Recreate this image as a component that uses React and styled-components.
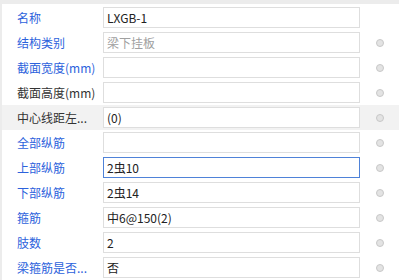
import React from 'react';
import styled, { createGlobalStyle } from 'styled-components';

const GlobalStyle = createGlobalStyle`
  body {
    margin: 0;
    background: #ffffff;
    font-family: "Noto Sans CJK SC", "Noto Sans", sans-serif;
  }
`;

const Panel = styled.div`
  width: 399px;
  height: 280px;
  box-sizing: border-box;
  border-top: 4px solid #ececec;
  border-left: 2px solid #ececec;
  padding-top: 1px;
  overflow: hidden;
`;

const Row = styled.div`
  display: grid;
  grid-template-columns: 101px 257px 1fr;
  align-items: center;
  height: 25px;
  background: ${props => (props.$highlight ? '#f2f2f2' : 'transparent')};
`;

const Label = styled.div`
  padding-left: 15px;
  font-size: 12px;
  line-height: 25px;
  white-space: nowrap;
  overflow: hidden;
  color: ${props => (props.$dark ? '#333333' : '#2c62dc')};
`;

const Field = styled.div`
  height: 21px;
  box-sizing: border-box;
  border: 1px solid ${props => (props.$active ? '#4f82d8' : '#dedede')};
  background: #ffffff;
  padding-left: 3px;
  font-size: 12px;
  line-height: 19px;
  color: ${props => (props.$disabled ? '#a0a0a0' : '#222222')};
  white-space: nowrap;
  overflow: hidden;
`;

const Dot = styled.span`
  justify-self: center;
  width: 8px;
  height: 8px;
  box-sizing: border-box;
  border-radius: 50%;
  background: #e3e3e3;
  border: 1px solid #c8c8c8;
  visibility: ${props => (props.$none ? 'hidden' : 'visible')};
`;

const rows = [
  { label: '名称', value: 'LXGB-1', noDot: true },
  { label: '结构类别', value: '梁下挂板', disabled: true },
  { label: '截面宽度(mm)', value: '' },
  { label: '截面高度(mm)', value: '', dark: true },
  { label: '中心线距左...', value: '(0)', dark: true, highlight: true },
  { label: '全部纵筋', value: '' },
  { label: '上部纵筋', value: '2虫10', active: true },
  { label: '下部纵筋', value: '2虫14' },
  { label: '箍筋', value: '中6@150(2)' },
  { label: '肢数', value: '2' },
  { label: '梁箍筋是否...', value: '否' },
];

export default function App() {
  return (
    <>
      <GlobalStyle />
      <Panel>
        {rows.map((r) => (
          <Row key={r.label} $highlight={r.highlight}>
            <Label $dark={r.dark}>{r.label}</Label>
            <Field $active={r.active} $disabled={r.disabled}>{r.value}</Field>
            <Dot $none={r.noDot} />
          </Row>
        ))}
      </Panel>
    </>
  );
}
